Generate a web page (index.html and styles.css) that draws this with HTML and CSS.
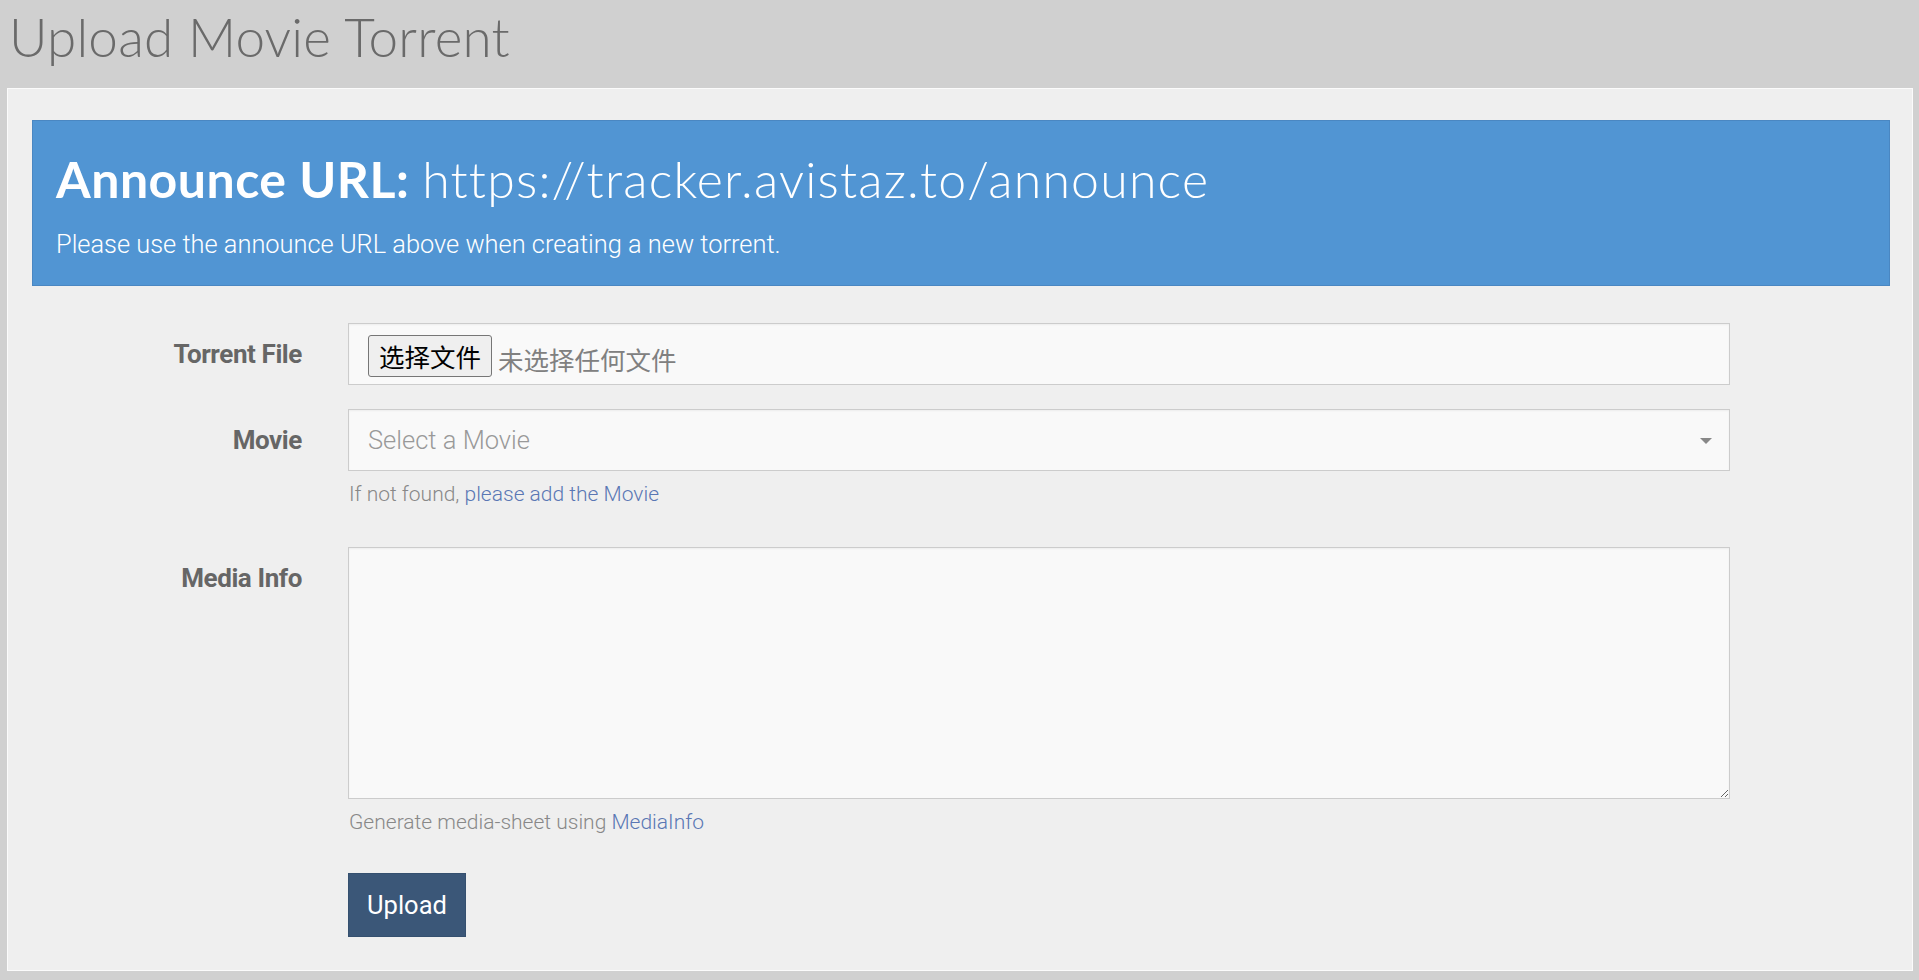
FILE: index.html
```html
<!DOCTYPE html>
<html>
<head>
<meta charset="utf-8">
<link rel="stylesheet" href="styles.css">
</head>
<body>
<h1 class="page-title">Upload Movie Torrent</h1>
<div class="panel">
  <div class="banner">
    <div class="announce"><span class="announce-label">Announce URL:</span> <span class="announce-url">https://tracker.avistaz.to/announce</span></div>
    <p class="announce-note">Please use the announce URL above when creating a new torrent.</p>
  </div>
  <form class="form">
    <div class="row">
      <label class="label">Torrent File</label>
      <div class="field">
        <div class="control file-control">
          <span class="file-btn">选择文件</span><span class="file-none">未选择任何文件</span>
        </div>
      </div>
    </div>
    <div class="row">
      <label class="label">Movie</label>
      <div class="field">
        <div class="control select-control">
          <span class="placeholder">Select a Movie</span>
          <span class="caret"></span>
        </div>
        <p class="help">If not found, <a href="#">please add the Movie</a></p>
      </div>
    </div>
    <div class="row row-media">
      <label class="label label-top">Media Info</label>
      <div class="field">
        <textarea class="control textarea"></textarea>
        <p class="help">Generate media-sheet using <a href="#">MediaInfo</a></p>
      </div>
    </div>
    <div class="row row-submit">
      <div></div>
      <div class="field">
        <button type="button" class="btn-upload">Upload</button>
      </div>
    </div>
  </form>
</div>
</body>
</html>
```
FILE: styles.css
```css
html, body {
  margin: 0;
  padding: 0;
}
body {
  background: #d0d0d0;
  font-family: Roboto, "Liberation Sans", sans-serif;
  width: 1919px;
  height: 980px;
  overflow: hidden;
}
.page-title {
  margin: 0;
  height: 88px;
  box-sizing: border-box;
  padding: 6px 0 0 9px;
  font-family: Lato, "Liberation Sans", sans-serif;
  font-weight: 300;
  font-size: 53px;
  line-height: 62px;
  color: #6a6a6a;
  letter-spacing: 0.2px;
}
.panel {
  margin: 0 6px 0 7px;
  background: #efefef;
  border: 1px solid #fbfbfb;
  padding: 31px 22px 32px 24px;
  height: 883px;
  box-sizing: border-box;
}
.banner {
  background: #5195d3;
  border: 1px solid #4a87c2;
  height: 166px;
  box-sizing: border-box;
  padding: 27px 23px 0 23px;
  color: #fff;
}
.announce {
  font-family: Lato, "Liberation Sans", sans-serif;
  font-size: 50px;
  line-height: 62px;
}
.announce-label {
  font-weight: 700;
  letter-spacing: 0.5px;
}
.announce-url {
  font-weight: 300;
  letter-spacing: 1.2px;
}
.announce-note {
  margin: 19px 0 0 0;
  font-family: Roboto, "Liberation Sans", sans-serif;
  font-weight: 300;
  font-size: 25.4px;
  line-height: 30px;
}
.form {
  margin-top: 37px;
}
.row {
  display: grid;
  grid-template-columns: 270px 1382px;
  column-gap: 46px;
  margin-bottom: 24px;
}
.label {
  text-align: right;
  font-weight: 700;
  font-size: 26px;
  color: #666;
  line-height: 62px;
  letter-spacing: -0.4px;
}
.label-top {
  line-height: 30px;
  padding-top: 16px;
}
.control {
  box-sizing: border-box;
  height: 62px;
  width: 100%;
  background: #f9f9f9;
  border: 1px solid #ccc;
  box-shadow: inset 0 1px 2px rgba(0,0,0,0.05);
}
.file-control {
  display: flex;
  align-items: center;
  padding-left: 19px;
}
.file-btn {
  font-family: "Noto Sans CJK SC", sans-serif;
  font-size: 25.5px;
  line-height: 40px;
  height: 42px;
  box-sizing: border-box;
  padding: 0 10px;
  border: 1px solid #767676;
  border-radius: 3px;
  background: #efefef;
  color: #000;
  margin-top: 4px;
}
.file-none {
  font-family: "Noto Sans CJK SC", sans-serif;
  font-size: 25.5px;
  color: #808080;
  margin-left: 6px;
  margin-top: 8px;
}
.select-control {
  display: flex;
  align-items: center;
  justify-content: space-between;
  padding: 0 17px 0 19px;
}
.placeholder {
  font-weight: 300;
  font-size: 25.5px;
  color: #999;
}
.caret {
  width: 0;
  height: 0;
  border-left: 6px solid transparent;
  border-right: 6px solid transparent;
  border-top: 6px solid #888;
  margin-top: 1px;
}
.help {
  margin: 8px 0 0 1px;
  font-weight: 300;
  font-size: 21px;
  line-height: 30px;
  color: #888;
}
.help a {
  color: #5a77b4;
  text-decoration: none;
  font-weight: 300;
}
.row-media {
  margin-top: 38px;
}
.textarea {
  display: block;
  height: 252px;
  resize: vertical;
  font-family: Roboto, sans-serif;
  font-size: 20px;
  outline: none;
}
.row-submit {
  margin-top: 36px;
}
.btn-upload {
  width: 118px;
  height: 64px;
  background: #3b5778;
  border: 1px solid #35506f;
  color: #fff;
  font-family: Roboto, sans-serif;
  font-size: 25.5px;
  padding: 0;
  cursor: pointer;
}
```
